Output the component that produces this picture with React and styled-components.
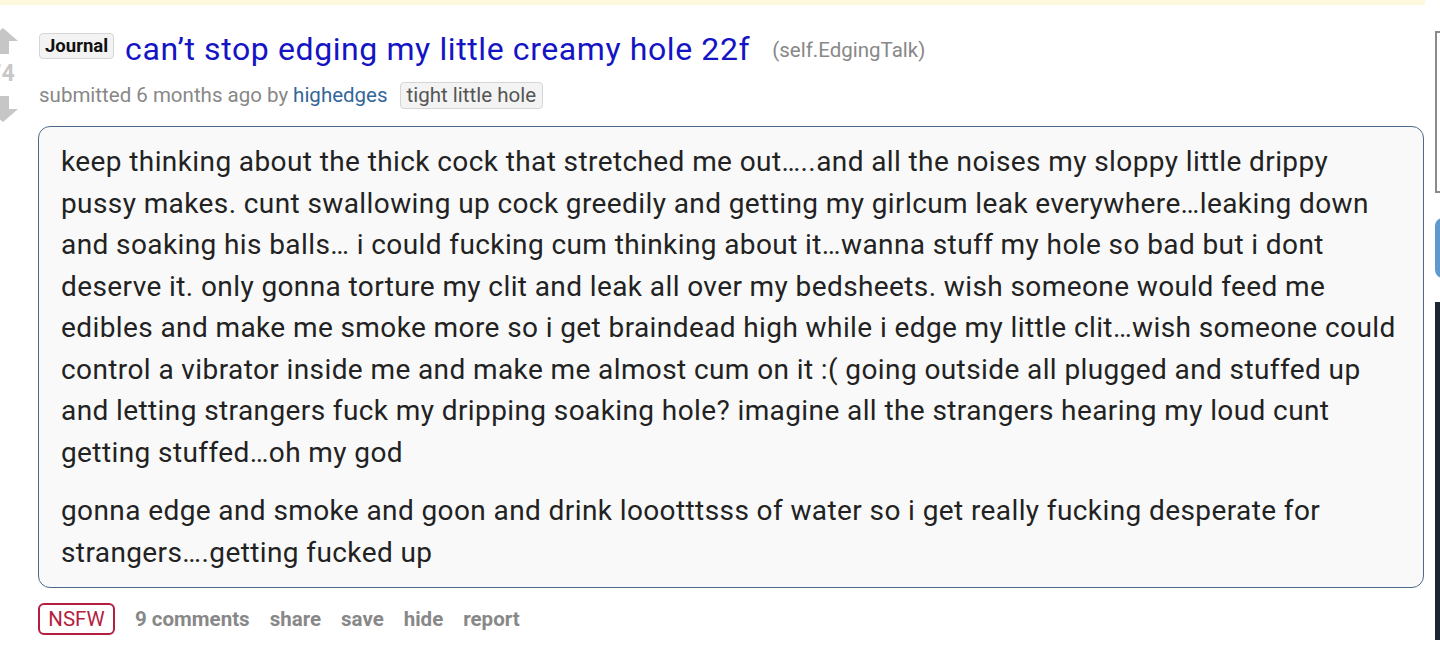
import React from "react";
import styled, { createGlobalStyle } from "styled-components";

const GlobalStyle = createGlobalStyle`
  html, body {
    margin: 0;
    padding: 0;
    background: #ffffff;
    overflow: hidden;
  }
  body {
    font-family: Roboto, "Liberation Sans", Arial, sans-serif;
  }
`;

const Page = styled.div`
  width: 1440px;
  height: 647px;
  position: relative;
  overflow: hidden;
`;

const TopStrip = styled.div`
  width: 1425px;
  height: 5px;
  background: #fdf9dc;
`;

const Layout = styled.div`
  display: flex;
  align-items: flex-start;
`;

const Main = styled.div`
  width: 1425px;
  display: flex;
  align-items: flex-start;
  flex-shrink: 0;
`;

const VoteColumn = styled.div`
  width: 38px;
  margin-left: -16px;
  margin-right: 17px;
  padding-top: 23px;
  display: flex;
  flex-direction: column;
  align-items: center;
  flex-shrink: 0;
`;

const Score = styled.div`
  font-size: 23px;
  font-weight: 700;
  color: #c8c8c8;
  line-height: 24px;
  margin: 8px 0 10px 0;
  padding-right: 3px;
`;

const Entry = styled.div`
  flex: 1;
  padding-top: 21px;
`;

const TitleRow = styled.div`
  display: flex;
  align-items: center;
  height: 40px;
`;

const Flair = styled.span`
  display: inline-flex;
  align-items: center;
  height: ${(p) => p.h || 24}px;
  padding: 0 ${(p) => p.px || 5}px;
  background: #f3f3f3;
  border: 1px solid #d6d6d6;
  border-radius: 4px;
  font-size: ${(p) => p.size || 17}px;
  font-weight: ${(p) => (p.bold ? 700 : 400)};
  color: ${(p) => p.color || "#111"};
  box-sizing: border-box;
`;

const Title = styled.a`
  font-size: 32px;
  color: #1414c4;
  text-decoration: none;
  margin-left: 11px;
  margin-top: 5px;
  letter-spacing: 0.6px;
`;

const Domain = styled.span`
  font-size: 20.5px;
  color: #888;
  margin-left: 22px;
  margin-top: 8px;
`;

const Tagline = styled.div`
  display: flex;
  align-items: center;
  font-size: 20.5px;
  color: #888;
  margin-top: 15px;
  height: 28px;
`;

const Author = styled.a`
  color: #336699;
  text-decoration: none;
  margin-left: 5px;
  margin-right: 12px;
`;

const PostBox = styled.div`
  margin-top: 17px;
  margin-left: -1px;
  width: 1386px;
  box-sizing: border-box;
  border: 1.5px solid #4d6b88;
  border-radius: 12px;
  background: #f9f9f9;
  padding: 14px 20px 14px 22px;
`;

const Para = styled.p`
  margin: 0;
  font-size: 28px;
  letter-spacing: 0.4px;
  line-height: 41.5px;
  color: #222;
  white-space: nowrap;
  & + & {
    margin-top: 17px;
  }
`;

const Buttons = styled.div`
  display: flex;
  align-items: center;
  gap: 20px;
  margin-top: 15px;
  margin-left: -1px;
`;

const NsfwStamp = styled.span`
  display: inline-flex;
  align-items: center;
  justify-content: center;
  width: 77px;
  height: 32px;
  box-sizing: border-box;
  border: 2px solid #b41e40;
  border-radius: 6px;
  color: #b41e40;
  font-size: 20.5px;
`;

const ActionLink = styled.a`
  font-size: 20.5px;
  font-weight: 700;
  color: #888;
  text-decoration: none;
`;

const Sidebar = styled.div`
  margin-left: 10px;
  width: 300px;
  flex-shrink: 0;
  display: flex;
  flex-direction: column;
`;

const SearchBox = styled.div`
  margin-top: 26px;
  height: 162px;
  border: 2px solid #8a8a8a;
  box-sizing: border-box;
  background: #fff;
`;

const SubmitButton = styled.div`
  margin-top: 25px;
  height: 60px;
  border-radius: 8px;
  background: #5f99cf;
`;

const DarkPanel = styled.div`
  margin-top: 24px;
  height: 338px;
  background: #1d2734;
`;

const Arrow = ({ down }) => (
  <svg
    width="32"
    height="26"
    viewBox="0 0 32 26"
    style={{ transform: down ? "rotate(180deg)" : "none" }}
  >
    <path d="M16 0 L31 13 L22 13 L22 26 L10 26 L10 13 L1 13 Z" fill="#c6c6c6" />
  </svg>
);

export default function App() {
  return (
    <Page>
      <GlobalStyle />
      <TopStrip />
      <Layout>
        <Main>
          <VoteColumn>
            <Arrow />
            <Score>74</Score>
            <Arrow down />
          </VoteColumn>
          <Entry>
            <TitleRow>
              <Flair bold h={26} size={18.5}>Journal</Flair>
              <Title href="#">can’t stop edging my little creamy hole 22f</Title>
              <Domain>(self.EdgingTalk)</Domain>
            </TitleRow>
            <Tagline>
              submitted 6 months ago by
              <Author href="#">highedges</Author>
              <Flair size={20.5} h={27} px={6} color="#555">tight little hole</Flair>
            </Tagline>
            <PostBox>
              <Para>
                keep thinking about the thick cock that stretched me out…..and all the noises my sloppy little drippy
                <br />
                pussy makes. cunt swallowing up cock greedily and getting my girlcum leak everywhere…leaking down
                <br />
                and soaking his balls… i could fucking cum thinking about it…wanna stuff my hole so bad but i dont
                <br />
                deserve it. only gonna torture my clit and leak all over my bedsheets. wish someone would feed me
                <br />
                edibles and make me smoke more so i get braindead high while i edge my little clit…wish someone could
                <br />
                control a vibrator inside me and make me almost cum on it :( going outside all plugged and stuffed up
                <br />
                and letting strangers fuck my dripping soaking hole? imagine all the strangers hearing my loud cunt
                <br />
                getting stuffed…oh my god
              </Para>
              <Para>
                gonna edge and smoke and goon and drink loootttsss of water so i get really fucking desperate for
                <br />
                strangers….getting fucked up
              </Para>
            </PostBox>
            <Buttons>
              <NsfwStamp>NSFW</NsfwStamp>
              <ActionLink href="#">9 comments</ActionLink>
              <ActionLink href="#">share</ActionLink>
              <ActionLink href="#">save</ActionLink>
              <ActionLink href="#">hide</ActionLink>
              <ActionLink href="#">report</ActionLink>
            </Buttons>
          </Entry>
        </Main>
        <Sidebar>
          <SearchBox />
          <SubmitButton />
          <DarkPanel />
        </Sidebar>
      </Layout>
    </Page>
  );
}
